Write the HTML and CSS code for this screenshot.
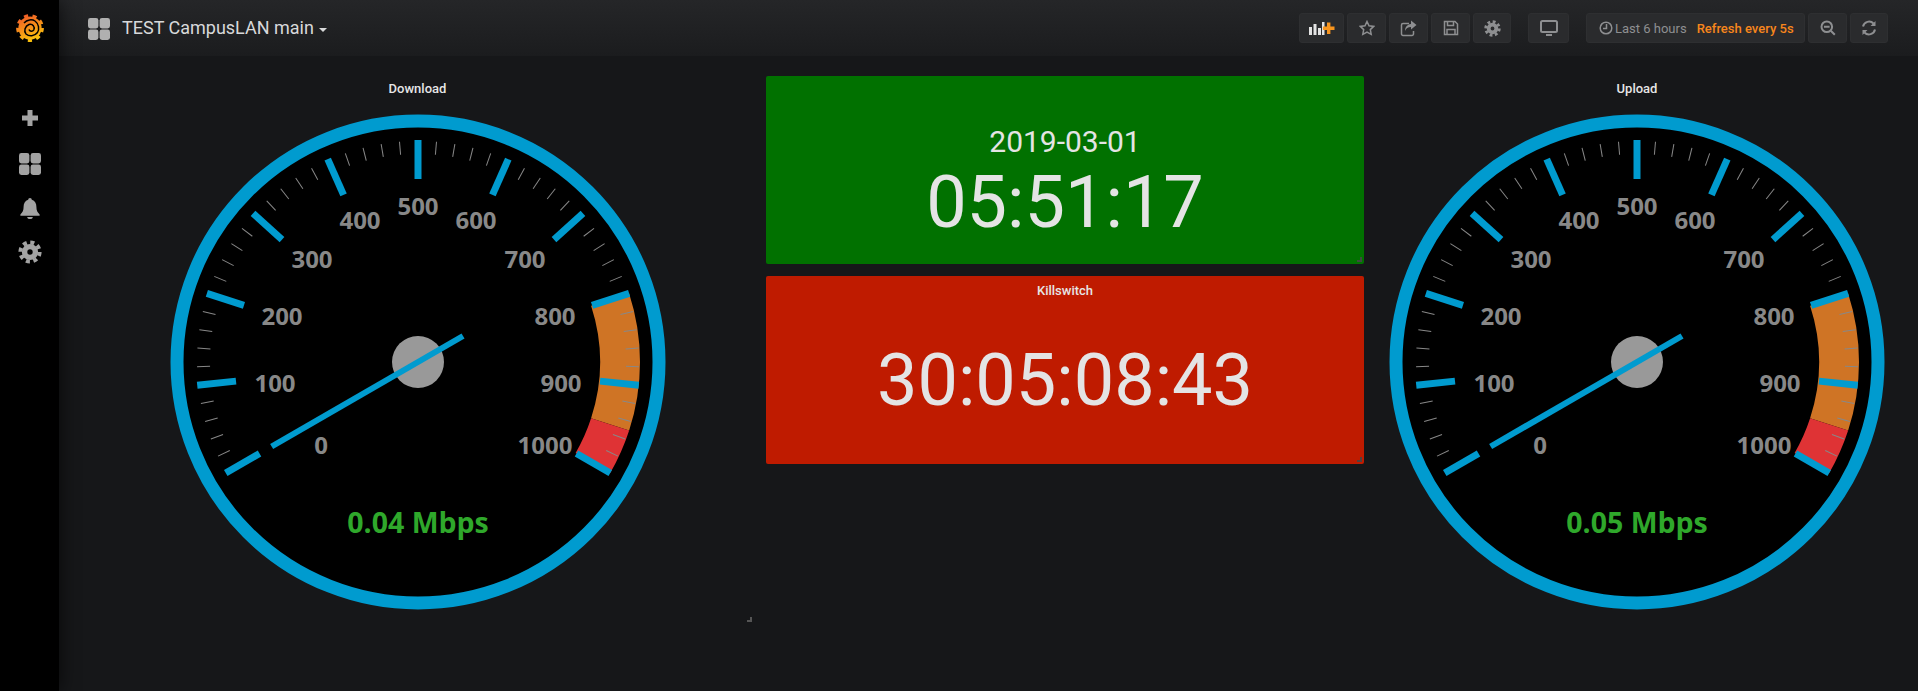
FILE: index.html
```html
<!DOCTYPE html>
<html lang="en">

<head>
  <meta charset="UTF-8">
  <title>TEST CampusLAN main - Grafana</title>
  <link rel="stylesheet" href="styles.css">
</head>

<body>
  <svg class="sprite" width="0" height="0">
    <defs>
      <linearGradient id="logoGrad" gradientUnits="userSpaceOnUse" x1="-7" y1="-13" x2="4" y2="14">
        <stop offset="0" stop-color="#f05a28" />
        <stop offset="1" stop-color="#fbca0a" />
      </linearGradient>
      <symbol id="icoDash" viewBox="0 0 22 22">
        <rect x="0" y="0" width="10.4" height="10.4" rx="2.4" />
        <rect x="11.6" y="0" width="10.4" height="10.4" rx="2.4" />
        <rect x="0" y="11.6" width="10.4" height="10.4" rx="2.4" />
        <rect x="11.6" y="11.6" width="10.4" height="10.4" rx="2.4" />
      </symbol>
      <symbol id="icoGear" viewBox="-12 -12 24 24">
        <circle r="9.6" fill="none" stroke="currentColor" stroke-width="4" stroke-dasharray="4 3.54" />
        <circle r="5.4" fill="none" stroke="currentColor" stroke-width="5.4" />
      </symbol>
      <!-- one sector of the dial: big tick plus four small ones -->
      <g id="sector">
        <line class="major" y1="-222" y2="-183" />
        <line class="minor" y1="-221" y2="-208" transform="rotate(4.8)" />
        <line class="minor" y1="-221" y2="-208" transform="rotate(9.6)" />
        <line class="minor" y1="-221" y2="-208" transform="rotate(14.4)" />
        <line class="minor" y1="-221" y2="-208" transform="rotate(19.2)" />
      </g>
      <g id="dial">
        <circle class="face" r="241" />
        <circle class="ring" r="241" />
        <path class="band-warn" d="M192.11 -62.42 A202 202 0 0 1 192.11 62.42" />
        <path class="band-crit" d="M192.11 62.42 A202 202 0 0 1 174.93 101" />
        <use href="#sector" transform="rotate(-120)" />
        <use href="#sector" transform="rotate(-96)" />
        <use href="#sector" transform="rotate(-72)" />
        <use href="#sector" transform="rotate(-48)" />
        <use href="#sector" transform="rotate(-24)" />
        <use href="#sector" />
        <use href="#sector" transform="rotate(24)" />
        <use href="#sector" transform="rotate(48)" />
        <use href="#sector" transform="rotate(72)" />
        <use href="#sector" transform="rotate(96)" />
        <line class="major" y1="-222" y2="-183" transform="rotate(120)" />
        <circle class="hub" r="26" />
        <line class="needle" y1="-169" y2="52" transform="rotate(-120)" />
      </g>
    </defs>
  </svg>

  <aside class="sidemenu">
    <svg class="logo" viewBox="-15 -15 30 30" width="30" height="30">
      <circle r="11.6" fill="url(#logoGrad)" />
      <circle r="12.4" fill="none" stroke="url(#logoGrad)" stroke-width="3" stroke-dasharray="4.2 4.46" />
      <path d="M-6 -5C-3 -8.500 2 -9 5 -7 9 -4 9.500 1 7.500 4.500 4.500 8.500 -1 8.500 -4 6 -6.500 3 -5 -2 -1 -3.500 3 -4.500 5 -1 3.800 1.800 2.500 4 -.5 3.500 -1 1.500" fill="none" stroke="#000" stroke-width="1.500" />
    </svg>
    <nav class="sidemenu-items">
      <svg class="side-icon" viewBox="0 0 18 18" width="18" height="18">
        <path d="M6.5 1h5v5.500h5.500v5h-5.500v5.500h-5v-5.500h-5.500v-5h5.500z" />
      </svg>
      <svg class="side-icon side-dash" width="22" height="22"><use href="#icoDash" /></svg>
      <svg class="side-icon" viewBox="0 0 24 24" width="22" height="24">
        <path d="M12 1a2 2 0 0 0-2 2c-3.500 1-5 4-5 8 0 3.500-1 6-3.500 8v1.500h21V19c-2.500-2-3.500-4.500-3.500-8 0-4-1.500-7-5-8a2 2 0 0 0-2-2zM9 21.800a3 2.200 0 0 0 6 0z" />
      </svg>
      <svg class="side-icon" width="24" height="24"><use href="#icoGear" /></svg>
    </nav>
  </aside>

  <div class="main">
    <header class="navbar">
      <svg class="nav-dash" width="22" height="22"><use href="#icoDash" /></svg>
      <span class="dash-title">TEST CampusLAN main</span>
      <span class="caret"></span>

      <div class="toolbar">
        <div class="btn-group">
          <button class="btn btn-add">
            <svg viewBox="0 0 26 15" width="26" height="15">
              <path class="bars" d="M0 6h3v8h-3zM4.500 3h3v11h-3zM9 7h3v7h-3zM13 1h2.500v13h-2.500z" />
              <path class="plus" d="M18 1.500h3.400v4.100h4.100v3.400h-4.100v4.100h-3.400v-4.100h-4.100v-3.400h4.100z" />
            </svg>
          </button>
          <button class="btn">
            <svg class="line" viewBox="0 0 16 16" width="16" height="16">
              <path d="M8 1.500l2 4.300 4.700.6-3.400 3.200.9 4.700L8 12l-4.200 2.300.9-4.700L1.300 6.400 6 5.800z" />
            </svg>
          </button>
          <button class="btn">
            <svg class="line" viewBox="0 0 17 17" width="17" height="17">
              <path d="M9 3.500H3a1.500 1.500 0 0 0-1.500 1.500v9A1.500 1.500 0 0 0 3 15.500h9a1.500 1.500 0 0 0 1.500-1.500v-3" />
              <path class="solid" d="M11 .5l5.500 4.500-5.500 4.500V7C8 7 6 8.500 5 11c0-4 2-6.500 6-7z" />
            </svg>
          </button>
          <button class="btn">
            <svg class="line" viewBox="0 0 16 16" width="16" height="16">
              <path d="M1.500 1.500h10.500l2.500 2.500v10.500h-13z" />
              <path d="M4.500 1.500v4h6v-4M4 14.500v-5h8v5" />
            </svg>
          </button>
          <button class="btn btn-narrow">
            <svg class="ico-gear" width="17" height="17"><use href="#icoGear" /></svg>
          </button>
        </div>
        <div class="btn-group">
          <button class="btn btn-tv">
            <svg class="line heavy" viewBox="0 0 18 17" width="18" height="17">
              <rect x="1" y="1" width="16" height="11" rx="1.500" />
              <path class="solid" d="M6 14h6v2h-6z" />
            </svg>
          </button>
        </div>
        <div class="btn-group">
          <button class="btn btn-time">
            <svg class="line" viewBox="0 0 14 14" width="14" height="14">
              <circle cx="7" cy="7" r="5.800" />
              <path d="M7.500 3v4.500h-3.500" />
            </svg>
            <span class="time-range">Last 6 hours</span>
            <span class="time-refresh">Refresh every 5s</span>
          </button>
          <button class="btn">
            <svg class="line heavy" viewBox="0 0 16 16" width="16" height="16">
              <circle cx="6.800" cy="6.800" r="5.300" />
              <path d="M4 6.800h5.600M10.800 10.800l4 4" />
            </svg>
          </button>
          <button class="btn btn-narrow">
            <svg class="line heavy" viewBox="0 0 16 16" width="16" height="16">
              <path d="M2 6.500A6.200 6.200 0 0 1 12.500 3.500M14 9.500A6.200 6.200 0 0 1 3.500 12.500" />
              <path class="solid" d="M14.500 1v5h-5zM1.500 15v-5h5z" />
            </svg>
          </button>
        </div>
      </div>
    </header>

    <div class="dashboard">
      <section class="panel">
        <div class="panel-title">Download</div>
        <svg class="gauge" viewBox="-248 -248 496 496" width="496" height="496">
          <use href="#dial" />
          <g class="labels">
            <text x="-97" y="92">0</text>
            <text x="-143" y="30">100</text>
            <text x="-136" y="-37">200</text>
            <text x="-106" y="-94">300</text>
            <text x="-58" y="-133">400</text>
            <text x="0" y="-147">500</text>
            <text x="58" y="-133">600</text>
            <text x="107" y="-94">700</text>
            <text x="137" y="-37">800</text>
            <text x="143" y="30">900</text>
            <text x="127" y="92">1000</text>
          </g>
          <text class="value" x="0" y="171">0.04 Mbps</text>
        </svg>
        <span class="handle"></span>
      </section>

      <div class="stats">
        <section class="stat stat-ok">
          <div class="panel-title"></div>
          <div class="stat-body">
            <div class="stat-date">2019-03-01</div>
            <div class="stat-time">05:51:17</div>
          </div>
          <span class="handle"></span>
        </section>
        <section class="stat stat-alert">
          <div class="panel-title">Killswitch</div>
          <div class="stat-body">
            <div class="stat-time">30:05:08:43</div>
          </div>
          <span class="handle"></span>
        </section>
      </div>

      <section class="panel">
        <div class="panel-title">Upload</div>
        <svg class="gauge" viewBox="-248 -248 496 496" width="496" height="496">
          <use href="#dial" />
          <g class="labels">
            <text x="-97" y="92">0</text>
            <text x="-143" y="30">100</text>
            <text x="-136" y="-37">200</text>
            <text x="-106" y="-94">300</text>
            <text x="-58" y="-133">400</text>
            <text x="0" y="-147">500</text>
            <text x="58" y="-133">600</text>
            <text x="107" y="-94">700</text>
            <text x="137" y="-37">800</text>
            <text x="143" y="30">900</text>
            <text x="127" y="92">1000</text>
          </g>
          <text class="value" x="0" y="171">0.05 Mbps</text>
        </svg>
      </section>
    </div>
  </div>
</body>

</html>
```

FILE: styles.css
```css
html,
body {
  height: 100%;
}

body {
  background-color: #161719;
  margin: 0;
  display: flex;
  overflow: hidden;
  font-family: Roboto, "Liberation Sans", sans-serif;
  color: #d8d9da;
}

.sprite {
  position: absolute;
}

/* side menu */
.sidemenu {
  width: 59px;
  flex: none;
  background: #000;
  box-shadow: 0 0 20px rgba(0, 0, 0, 0.7);
  display: flex;
  flex-direction: column;
  align-items: center;
  position: relative;
}

.logo {
  margin-top: 13px;
}

.sidemenu-items {
  display: flex;
  flex-direction: column;
  align-items: center;
  margin-top: 66px;
  gap: 20px;
  color: #a3a3a3;
}

.side-icon {
  fill: #a3a3a3;
}

.side-dash {
  margin: 6px 0 1px;
}

/* top bar */
.main {
  flex: 1;
  min-width: 0;
}

.navbar {
  height: 56px;
  display: flex;
  align-items: center;
  padding-left: 29px;
  box-sizing: border-box;
  background: linear-gradient(#252628, #1b1c1e);
}

.nav-dash {
  fill: #b0b0b0;
  margin-top: 1px;
}

.dash-title {
  font-size: 18px;
  margin: -1px 0 0 12px;
}

.caret {
  border-top: 4px solid #d8d9da;
  border-left: 4px solid transparent;
  border-right: 4px solid transparent;
  margin: 3px 0 0 5px;
}

.toolbar {
  margin-left: auto;
  padding-right: 30px;
  display: flex;
  gap: 17px;
}

.btn-group {
  display: flex;
  gap: 3px;
}

.btn {
  width: 39px;
  height: 30px;
  padding: 0;
  display: flex;
  align-items: center;
  justify-content: center;
  background: #2a2b2d;
  border: 1px solid #2e2f31;
  border-radius: 3px;
  color: #9a9b9c;
  font-family: inherit;
}

.btn-add {
  width: 45px;
}

.btn-narrow {
  width: 38px;
}

.btn-tv {
  width: 41px;
}

.btn-time {
  width: 219px;
  font-size: 13px;
  justify-content: flex-start;
  padding-left: 12px;
}

.bars {
  fill: #e3e3e3;
}

.plus {
  fill: #f7941d;
}

.line {
  fill: none;
  stroke: #8e8f91;
  stroke-width: 1.5;
}

.line.heavy {
  stroke-width: 2;
}

.line .solid {
  fill: #8e8f91;
  stroke: none;
}

.ico-gear {
  color: #8e8f91;
}

.time-range {
  margin-left: 2px;
  color: #8e8f91;
}

.time-refresh {
  margin-left: 10px;
  color: #f7861c;
  font-weight: 500;
}

/* dashboard grid */
.dashboard {
  display: grid;
  grid-template-columns: 673px 598px 522px;
  gap: 12px;
  padding: 20px 0 0 22px;
  align-items: start;
}

.panel {
  height: 550px;
  display: flex;
  flex-direction: column;
  align-items: center;
  position: relative;
}

.panel-title {
  height: 24px;
  line-height: 26px;
  font-size: 13px;
  font-weight: 500;
  text-align: center;
  color: #e6e6e6;
}

.gauge {
  margin-top: 14px;
}

.handle {
  position: absolute;
  right: 2px;
  bottom: 4px;
  width: 3px;
  height: 3px;
  border-right: 2px solid #555;
  border-bottom: 2px solid #555;
}

/* gauge parts */
.ring {
  fill: none;
  stroke: #009bcf;
  stroke-width: 13;
}

.face {
  fill: #000;
}

.band-warn,
.band-crit {
  fill: none;
  stroke-width: 40;
}

.band-warn {
  stroke: #cf7425;
}

.band-crit {
  stroke: #df3335;
}

.major {
  stroke: #009bcf;
  stroke-width: 7;
}

.minor {
  stroke: #888;
  stroke-width: 1;
}

.hub {
  fill: #999;
}

.needle {
  stroke: #009bcf;
  stroke-width: 6;
}

.labels text {
  fill: #888;
  font-family: "Open Sans", "Noto Sans", sans-serif;
  font-size: 24px;
  font-weight: 700;
  text-anchor: middle;
}

.value {
  fill: #2fa82b;
  font-family: "Open Sans", "Noto Sans", sans-serif;
  font-size: 28.5px;
  font-weight: 700;
  text-anchor: middle;
}

/* stat panels */
.stats {
  display: flex;
  flex-direction: column;
  gap: 12px;
}

.stat {
  height: 188px;
  display: flex;
  flex-direction: column;
  border-radius: 2px;
  position: relative;
}

.stat .handle {
  bottom: 2px;
  border-color: rgba(70, 70, 70, 0.9);
}

.stat-ok {
  background: #017100;
}

.stat-alert {
  background: #bf1b00;
}

.stat-body {
  flex: 1;
  display: flex;
  flex-direction: column;
  align-items: center;
  justify-content: center;
  padding-bottom: 2px;
  color: #e4e4e4;
}

.stat-ok .stat-body {
  padding: 4px 0 0;
}

.stat-alert .panel-title {
  line-height: 30px;
}

.stat-date {
  font-size: 30px;
  line-height: 38px;
}

.stat-time {
  font-size: 72px;
  line-height: 84px;
}
```
